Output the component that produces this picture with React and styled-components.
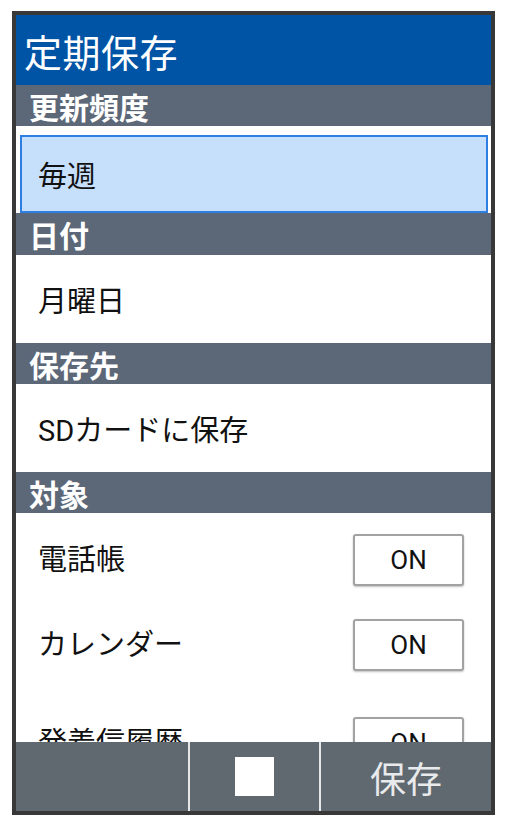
import React from "react";
import styled, { createGlobalStyle } from "styled-components";

const GlobalStyle = createGlobalStyle`
  html, body {
    margin: 0;
    padding: 0;
    background: #ffffff;
  }
  body {
    font-family: "Roboto", "Noto Sans CJK JP", sans-serif;
  }
`;

// Frame
const Screen = styled.div`
  box-sizing: border-box;
  margin: 11px 0 0 12px;
  width: 483px;
  height: 804px;
  border: 4px solid #383838;
  display: flex;
  flex-direction: column;
  overflow: hidden;
  background: #ffffff;
`;

const TitleBar = styled.header`
  height: 70px;
  flex: none;
  background: #0054a6;
  color: #ffffff;
  display: flex;
  align-items: center;
  padding-left: 8px;
  font-size: 38px;
  letter-spacing: 0.5px;
`;

const Body = styled.div`
  flex: 1;
  overflow: hidden;
`;

const SectionHeader = styled.div`
  height: ${(p) => p.h || 41}px;
  background: #5c6878;
  color: #ffffff;
  font-size: 30px;
  font-weight: 700;
  display: flex;
  align-items: center;
  padding-left: 13px;
`;

const Row = styled.div`
  height: 88px;
  display: flex;
  align-items: center;
  padding-left: 22px;
  font-size: 29px;
  color: #111111;
`;

const SelectedWrap = styled.div`
  height: 87px;
  box-sizing: border-box;
  padding: 9px 3px 0 4px;
`;

const Selected = styled.div`
  box-sizing: border-box;
  height: 78px;
  background: #c6dffb;
  border: 2px solid #2f7fe2;
  display: flex;
  align-items: center;
  padding-left: 16px;
  font-size: 29px;
  color: #111111;
`;

const ToggleRow = styled.div`
  height: 85px;
  box-sizing: border-box;
  padding: ${(p) => p.top || 21}px 27px 0 22px;
  display: flex;
  justify-content: space-between;
  align-items: flex-start;
  font-size: 29px;
  color: #111111;
`;

const Label = styled.span`
  line-height: 52px;
`;

const Toggle = styled.button`
  width: 111px;
  height: 52px;
  box-sizing: border-box;
  border: 2px solid #a2a2a2;
  border-radius: 3px;
  background: #ffffff;
  box-shadow: 0 1px 2px rgba(0, 0, 0, 0.25);
  font-family: "Roboto", sans-serif;
  font-size: 26px;
  color: #111111;
  padding: 0;
`;

const Footer = styled.footer`
  height: 69px;
  flex: none;
  display: grid;
  grid-template-columns: 172px 129px 1fr;
  gap: 2px;
  background: #e4e6e8;
`;

const FooterCell = styled.div`
  background: #606970;
  display: flex;
  align-items: center;
  justify-content: center;
  color: #e8eaec;
  font-size: 36px;
`;

const Square = styled.div`
  width: 39px;
  height: 39px;
  background: #ffffff;
`;

export default function App() {
  return (
    <>
      <GlobalStyle />
      <Screen>
        <TitleBar>定期保存</TitleBar>
        <Body>
          <SectionHeader>更新頻度</SectionHeader>
          <SelectedWrap>
            <Selected>毎週</Selected>
          </SelectedWrap>
          <SectionHeader h={42}>日付</SectionHeader>
          <Row>月曜日</Row>
          <SectionHeader>保存先</SectionHeader>
          <Row>SDカードに保存</Row>
          <SectionHeader>対象</SectionHeader>
          <ToggleRow>
            <Label>電話帳</Label>
            <Toggle>ON</Toggle>
          </ToggleRow>
          <ToggleRow>
            <Label>カレンダー</Label>
            <Toggle>ON</Toggle>
          </ToggleRow>
          <ToggleRow top={34}>
            <Label>発着信履歴</Label>
            <Toggle>ON</Toggle>
          </ToggleRow>
        </Body>
        <Footer>
          <FooterCell />
          <FooterCell>
            <Square />
          </FooterCell>
          <FooterCell>保存</FooterCell>
        </Footer>
      </Screen>
    </>
  );
}
